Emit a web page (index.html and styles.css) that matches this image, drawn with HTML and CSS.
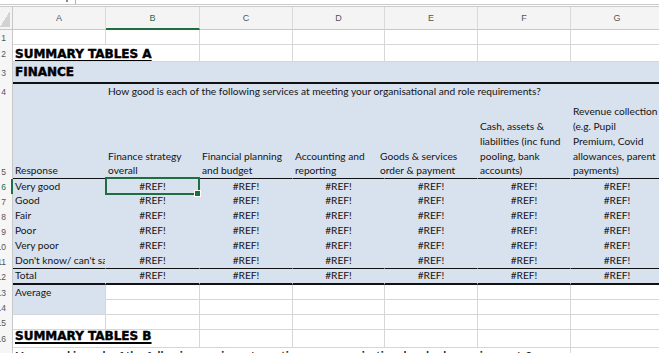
FILE: index.html
```html
<!DOCTYPE html>
<html lang="en">
<head>
<meta charset="utf-8">
<title>Summary Tables</title>
<link rel="stylesheet" href="styles.css">
</head>
<body>
<div class="topbar"><span class="nb-mark"></span><span class="nb-sep"></span></div>
<div class="sheet">
  <div class="row hdr">
    <div class="corner"><span class="tri"></span></div>
    <div class="hc">A</div><div class="hc sel">B</div><div class="hc">C</div><div class="hc">D</div><div class="hc">E</div><div class="hc">F</div><div class="hc">G</div>
  </div>
  <div class="row r1">
    <div class="rh"><span>1</span></div>
    <div class="c"></div><div class="c"></div><div class="c"></div><div class="c"></div><div class="c"></div><div class="c"></div><div class="c"></div>
  </div>
  <div class="row r2">
    <div class="rh"><span>2</span></div>
    <div class="c s2"><span class="title">SUMMARY TABLES A</span></div><div class="c"></div><div class="c"></div><div class="c"></div><div class="c"></div><div class="c"></div>
  </div>
  <div class="row r3 blue bl2">
    <div class="rh"><span>3</span></div>
    <div class="c s7"><span class="title plain">FINANCE</span></div>
  </div>
  <div class="row r4 blue">
    <div class="rh"><span>4</span></div>
    <div class="c"></div>
    <div class="c s6">How good is each of the following services at meeting your organisational and role requirements?</div>
  </div>
  <div class="row r5 blue bl1">
    <div class="rh low"><span>5</span></div>
    <div class="c"><span class="wrap">Response</span></div>
    <div class="c"><span class="wrap">Finance strategy<br>overall</span></div>
    <div class="c"><span class="wrap">Financial planning<br>and budget</span></div>
    <div class="c"><span class="wrap">Accounting and<br>reporting</span></div>
    <div class="c spill"><span class="wrap shift">Goods &amp; services<br>order &amp; payment</span></div>
    <div class="c"><span class="wrap">Cash, assets &amp;<br>liabilities (inc fund<br>pooling, bank<br>accounts)</span></div>
    <div class="c"><span class="wrap">Revenue collection<br>(e.g. Pupil<br>Premium, Covid<br>allowances, parent<br>payments)</span></div>
  </div>
  <div class="row r15 blue">
    <div class="rh rsel"><span>6</span></div>
    <div class="c">Very good</div>
    <div class="c num active">#REF!<span class="selbox"></span><span class="handle"></span></div>
    <div class="c num">#REF!</div><div class="c num">#REF!</div><div class="c num">#REF!</div><div class="c num">#REF!</div><div class="c num">#REF!</div>
  </div>
  <div class="row r15 blue">
    <div class="rh"><span>7</span></div>
    <div class="c">Good</div>
    <div class="c num">#REF!</div><div class="c num">#REF!</div><div class="c num">#REF!</div><div class="c num">#REF!</div><div class="c num">#REF!</div><div class="c num">#REF!</div>
  </div>
  <div class="row r15 blue">
    <div class="rh"><span>8</span></div>
    <div class="c">Fair</div>
    <div class="c num">#REF!</div><div class="c num">#REF!</div><div class="c num">#REF!</div><div class="c num">#REF!</div><div class="c num">#REF!</div><div class="c num">#REF!</div>
  </div>
  <div class="row r15 blue">
    <div class="rh"><span>9</span></div>
    <div class="c">Poor</div>
    <div class="c num">#REF!</div><div class="c num">#REF!</div><div class="c num">#REF!</div><div class="c num">#REF!</div><div class="c num">#REF!</div><div class="c num">#REF!</div>
  </div>
  <div class="row r15 blue">
    <div class="rh"><span>10</span></div>
    <div class="c">Very poor</div>
    <div class="c num">#REF!</div><div class="c num">#REF!</div><div class="c num">#REF!</div><div class="c num">#REF!</div><div class="c num">#REF!</div><div class="c num">#REF!</div>
  </div>
  <div class="row r15 blue bl1">
    <div class="rh"><span>11</span></div>
    <div class="c">Don't know/ can't say</div>
    <div class="c num">#REF!</div><div class="c num">#REF!</div><div class="c num">#REF!</div><div class="c num">#REF!</div><div class="c num">#REF!</div><div class="c num">#REF!</div>
  </div>
  <div class="row r12 blue bl2">
    <div class="rh"><span>12</span></div>
    <div class="c">Total</div>
    <div class="c num">#REF!</div><div class="c num">#REF!</div><div class="c num">#REF!</div><div class="c num">#REF!</div><div class="c num">#REF!</div><div class="c num">#REF!</div>
  </div>
  <div class="row r15">
    <div class="rh"><span>13</span></div>
    <div class="c avg top">Average</div>
    <div class="c"></div><div class="c"></div><div class="c"></div><div class="c"></div><div class="c"></div><div class="c"></div>
  </div>
  <div class="row r15">
    <div class="rh"><span>14</span></div>
    <div class="c avg2"></div>
    <div class="c"></div><div class="c"></div><div class="c"></div><div class="c"></div><div class="c"></div><div class="c"></div>
  </div>
  <div class="row r15">
    <div class="rh"><span>15</span></div>
    <div class="c"></div><div class="c"></div><div class="c"></div><div class="c"></div><div class="c"></div><div class="c"></div><div class="c"></div>
  </div>
  <div class="row r16">
    <div class="rh"><span>16</span></div>
    <div class="c s2"><span class="title">SUMMARY TABLES B</span></div><div class="c"></div><div class="c"></div><div class="c"></div><div class="c"></div><div class="c"></div>
  </div>
  <div class="row r17">
    <div class="rh"><span>17</span></div>
    <div class="c s6 big">How good is each of the following services at meeting your organisational and role requirements?</div>
    <div class="c"></div>
  </div>
</div>
</body>
</html>
```
FILE: styles.css
```css
:root {
  --blue: #d8e1ee;
  --grid: #d6d6d6;
  --green: #1e6e42;
}
* { box-sizing: border-box; }
html, body { margin: 0; padding: 0; background: #fff; }
body {
  width: 659px;
  height: 353px;
  overflow: hidden;
  font-family: Lato, "Liberation Sans", sans-serif;
  font-size: 10.2px;
  color: #141414;
}

.topbar {
  height: 7px;
  border-bottom: 3px double #c9c9c9;
  display: flex;
  align-items: flex-start;
}
.nb-mark { width: 2px; height: 2px; background: #8a8a8a; margin-left: 66px; }
.nb-sep { width: 1px; height: 4px; background: #b0b0b0; margin-left: 7px; }

.sheet { width: 664px; }
.row {
  display: grid;
  grid-template-columns: 13px 93px 94px 93px 92px 93px 93px 93px;
}

/* column headers */
.hdr { height: 23px; }
.hdr .hc {
  background: #f4f4f4;
  border-right: 1px solid #dadada;
  border-bottom: 1px solid #c8c8c8;
  display: flex;
  align-items: center;
  justify-content: center;
  font-family: "Liberation Sans", Arial, sans-serif;
  font-size: 9px;
  color: #555;
}
.hdr .hc.sel {
  color: var(--green);
  border-bottom: 2px solid var(--green);
}
.corner {
  background: #f4f4f4;
  border-right: 1px solid #c8c8c8;
  border-bottom: 1px solid #c8c8c8;
  display: flex;
  align-items: flex-end;
  justify-content: flex-end;
  padding: 0 2px 2px 0;
}
.tri {
  width: 10px;
  height: 16px;
  background: linear-gradient(to top left, #d2d2d2 50%, transparent 50%);
}

/* row headers */
.rh {
  background: #f6f6f6;
  border-right: 1px solid #c8c8c8;
  display: flex;
  justify-content: flex-end;
  align-items: center;
  padding-right: 6px;
  overflow: hidden;
  font-family: "Liberation Sans", Arial, sans-serif;
  font-size: 8.5px;
  color: #555;
}
.rh span { flex: none; }
.rh.low { align-items: flex-end; padding-bottom: 2px; }
.rh.rsel { color: var(--green); border-right: 2px solid var(--green); padding-right: 5px; }

/* cells */
.c {
  border-right: 1px solid var(--grid);
  border-bottom: 1px solid var(--grid);
  display: flex;
  align-items: flex-end;
  padding: 0 2px;
  white-space: nowrap;
  overflow: hidden;
  line-height: 15px;
  min-width: 0;
}
.s2 { grid-column: span 2; }
.s6 { grid-column: span 6; }
.s7 { grid-column: span 7; }
.num { justify-content: center; }
.top { align-items: flex-start; }
.spill { overflow: visible; }

.blue > .c { background: var(--blue); border-color: var(--blue); }
.bl1 > .c { border-bottom: 1px solid #111; }
.bl2 > .c { border-bottom: 2px solid #111; }

.r1 { height: 15px; }
.r2 { height: 17px; }
.r3 { height: 22px; }
.r4 { height: 16px; }
.r5 { height: 79px; }
.r15 { height: 15px; }
.r12 { height: 16px; }
.r16 { height: 18px; }
.r17 { height: 20px; }

.r3 .c { padding-bottom: 3px; }
.r16 .c.s2 { padding-bottom: 4px; }
.r4 .c { align-items: center; }

.title {
  font-family: "DejaVu Sans", "Liberation Sans", sans-serif;
  font-weight: bold;
  font-size: 12px;
  line-height: 14px;
  color: #000;
  -webkit-text-stroke: 0.45px #000;
  text-decoration: underline;
  text-decoration-thickness: 2px;
  text-underline-offset: 1.5px;
}
.title.plain { text-decoration: none; }

.wrap { display: block; line-height: 14.7px; }
.shift { margin-left: -7px; }

.avg { background: var(--blue); border-bottom-color: var(--blue); }
.avg2 { background: var(--blue); }

.active { position: relative; overflow: visible; }
.selbox {
  position: absolute;
  top: -2px;
  left: -1px;
  right: -1px;
  bottom: -1px;
  border: 2px solid var(--green);
}
.handle {
  position: absolute;
  right: -2px;
  bottom: -3px;
  width: 7px;
  height: 7px;
  background: var(--green);
  border: 1px solid #fff;
}

.big {
  font-weight: bold;
  font-size: 12px;
  line-height: 14px;
  align-items: flex-start;
  padding-top: 1px;
  color: #2a2a2a;
}
```
